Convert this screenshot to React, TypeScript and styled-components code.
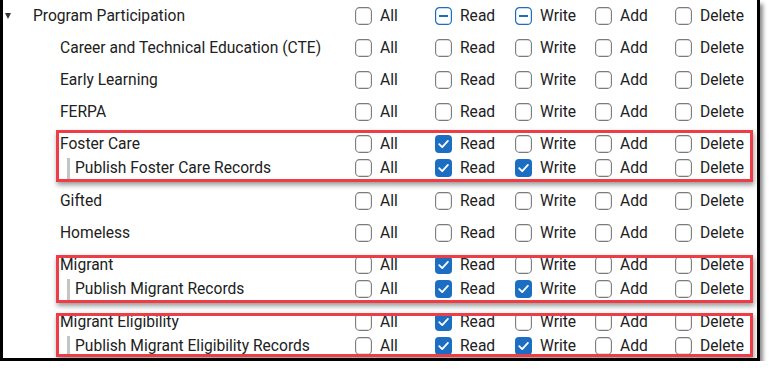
import React from 'react';
import styled, { createGlobalStyle } from 'styled-components';

const GlobalStyle = createGlobalStyle`
    html, body {
        margin: 0;
        padding: 0;
        background: #ffffff;
    }
    body {
        font-family: Roboto, "Noto Sans", "Liberation Sans", sans-serif;
        color: #212121;
    }
`;

const Frame = styled.div`
    width: 754px;
    height: 358px;
    border: 3px solid #000;
    border-top: none;
    background: #fff;
    box-shadow: 3px 4px 4px rgba(0, 0, 0, 0.45);
    overflow: hidden;
`;

const List = styled.div`
    display: flex;
    flex-direction: column;
`;

const Row = styled.div<{ $tight?: boolean }>`
    display: grid;
    grid-template-columns: 352px repeat(5, 80px);
    align-items: center;
    height: ${(p) => (p.$tight ? 24 : 32)}px;
    font-size: 15.6px;
`;

const Label = styled.div<{ $indent: number }>`
    display: flex;
    align-items: center;
    padding-left: ${(p) => p.$indent}px;
    white-space: nowrap;
`;

const Caret = styled.svg`
    width: 6px;
    height: 6px;
    margin-right: 22px;
    fill: #333;
`;

const ChildBar = styled.span`
    width: 3px;
    height: 21px;
    background: #c4c4c4;
    margin-right: 5px;
`;

const Option = styled.label`
    display: flex;
    align-items: center;
    gap: 8px;
`;

const Box = styled.svg`
    width: 17px;
    height: 18px;
    flex: none;
`;

const Group = styled.div`
    position: relative;
    padding: 4px 0 5px;
`;

const Highlight = styled.div<{ $top: number; $bottom: number }>`
    position: absolute;
    left: 53px;
    width: 691px;
    top: ${(p) => p.$top}px;
    bottom: ${(p) => p.$bottom}px;
    border: 3px solid #ef3d47;
    box-shadow: 1px 3px 5px rgba(0, 0, 0, 0.4);
    pointer-events: none;
`;

type State = 'off' | 'on' | 'mixed';

const Check = ({ state }: { state: State }) => {
    if (state === 'on') {
        return (
            <Box viewBox="0 0 17 18">
                <rect x="0" y="0" width="17" height="18" rx="4" fill="#1b6ec2" />
                <path d="M4.2 9.2 L7.2 12.1 L12.9 5.9" stroke="#fff" strokeWidth="1.8" fill="none" strokeLinecap="round" strokeLinejoin="round" />
            </Box>
        );
    }
    if (state === 'mixed') {
        return (
            <Box viewBox="0 0 17 18">
                <rect x="0.6" y="0.6" width="15.8" height="16.8" rx="4" fill="#fff" stroke="#1b6ec2" strokeWidth="1.2" />
                <rect x="4" y="8" width="9" height="2" fill="#1b6ec2" />
            </Box>
        );
    }
    return (
        <Box viewBox="0 0 17 18">
            <rect x="0.6" y="0.6" width="15.8" height="16.8" rx="4" fill="#fff" stroke="#7a7a7a" strokeWidth="1.1" />
        </Box>
    );
};

const COLS = ['All', 'Read', 'Write', 'Add', 'Delete'];

type Item = {
    name: string;
    level: 'top' | 'sub' | 'child';
    states?: State[];
};

const off: State[] = ['off', 'off', 'off', 'off', 'off'];
const readOnly: State[] = ['off', 'on', 'off', 'off', 'off'];
const readWrite: State[] = ['off', 'on', 'on', 'off', 'off'];

const PermRow = ({ item, tight }: { item: Item; tight?: boolean }) => {
    const states = item.states ?? off;
    return (
        <Row $tight={tight}>
            {item.level === 'top' && (
                <Label $indent={2}>
                    <Caret viewBox="0 0 6 6">
                        <polygon points="0,0 6,0 3,6" />
                    </Caret>
                    {item.name}
                </Label>
            )}
            {item.level === 'sub' && <Label $indent={57}>{item.name}</Label>}
            {item.level === 'child' && (
                <Label $indent={64}>
                    <ChildBar />
                    {item.name}
                </Label>
            )}
            {COLS.map((c, i) => (
                <Option key={c}>
                    <Check state={states[i]} />
                    {c}
                </Option>
            ))}
        </Row>
    );
};

const Pair = ({ parent, child, top, bottom }: { parent: string; child: string; top: number; bottom: number }) => (
    <Group>
        <PermRow tight item={{ name: parent, level: 'sub', states: readOnly }} />
        <PermRow tight item={{ name: child, level: 'child', states: readWrite }} />
        <Highlight $top={top} $bottom={bottom} />
    </Group>
);

const App = () => {
    return (
        <>
            <GlobalStyle />
            <Frame>
                <List>
                    <PermRow item={{ name: 'Program Participation', level: 'top', states: ['off', 'mixed', 'mixed', 'off', 'off'] }} />
                    <PermRow item={{ name: 'Career and Technical Education (CTE)', level: 'sub' }} />
                    <PermRow item={{ name: 'Early Learning', level: 'sub' }} />
                    <PermRow item={{ name: 'FERPA', level: 'sub' }} />
                    <Pair parent="Foster Care" child="Publish Foster Care Records" top={2} bottom={3} />
                    <PermRow item={{ name: 'Gifted', level: 'sub' }} />
                    <PermRow item={{ name: 'Homeless', level: 'sub' }} />
                    <Pair parent="Migrant" child="Publish Migrant Records" top={6} bottom={3} />
                    <Pair parent="Migrant Eligibility" child="Publish Migrant Eligibility Records" top={7} bottom={6} />
                </List>
            </Frame>
        </>
    );
};

export default App;
